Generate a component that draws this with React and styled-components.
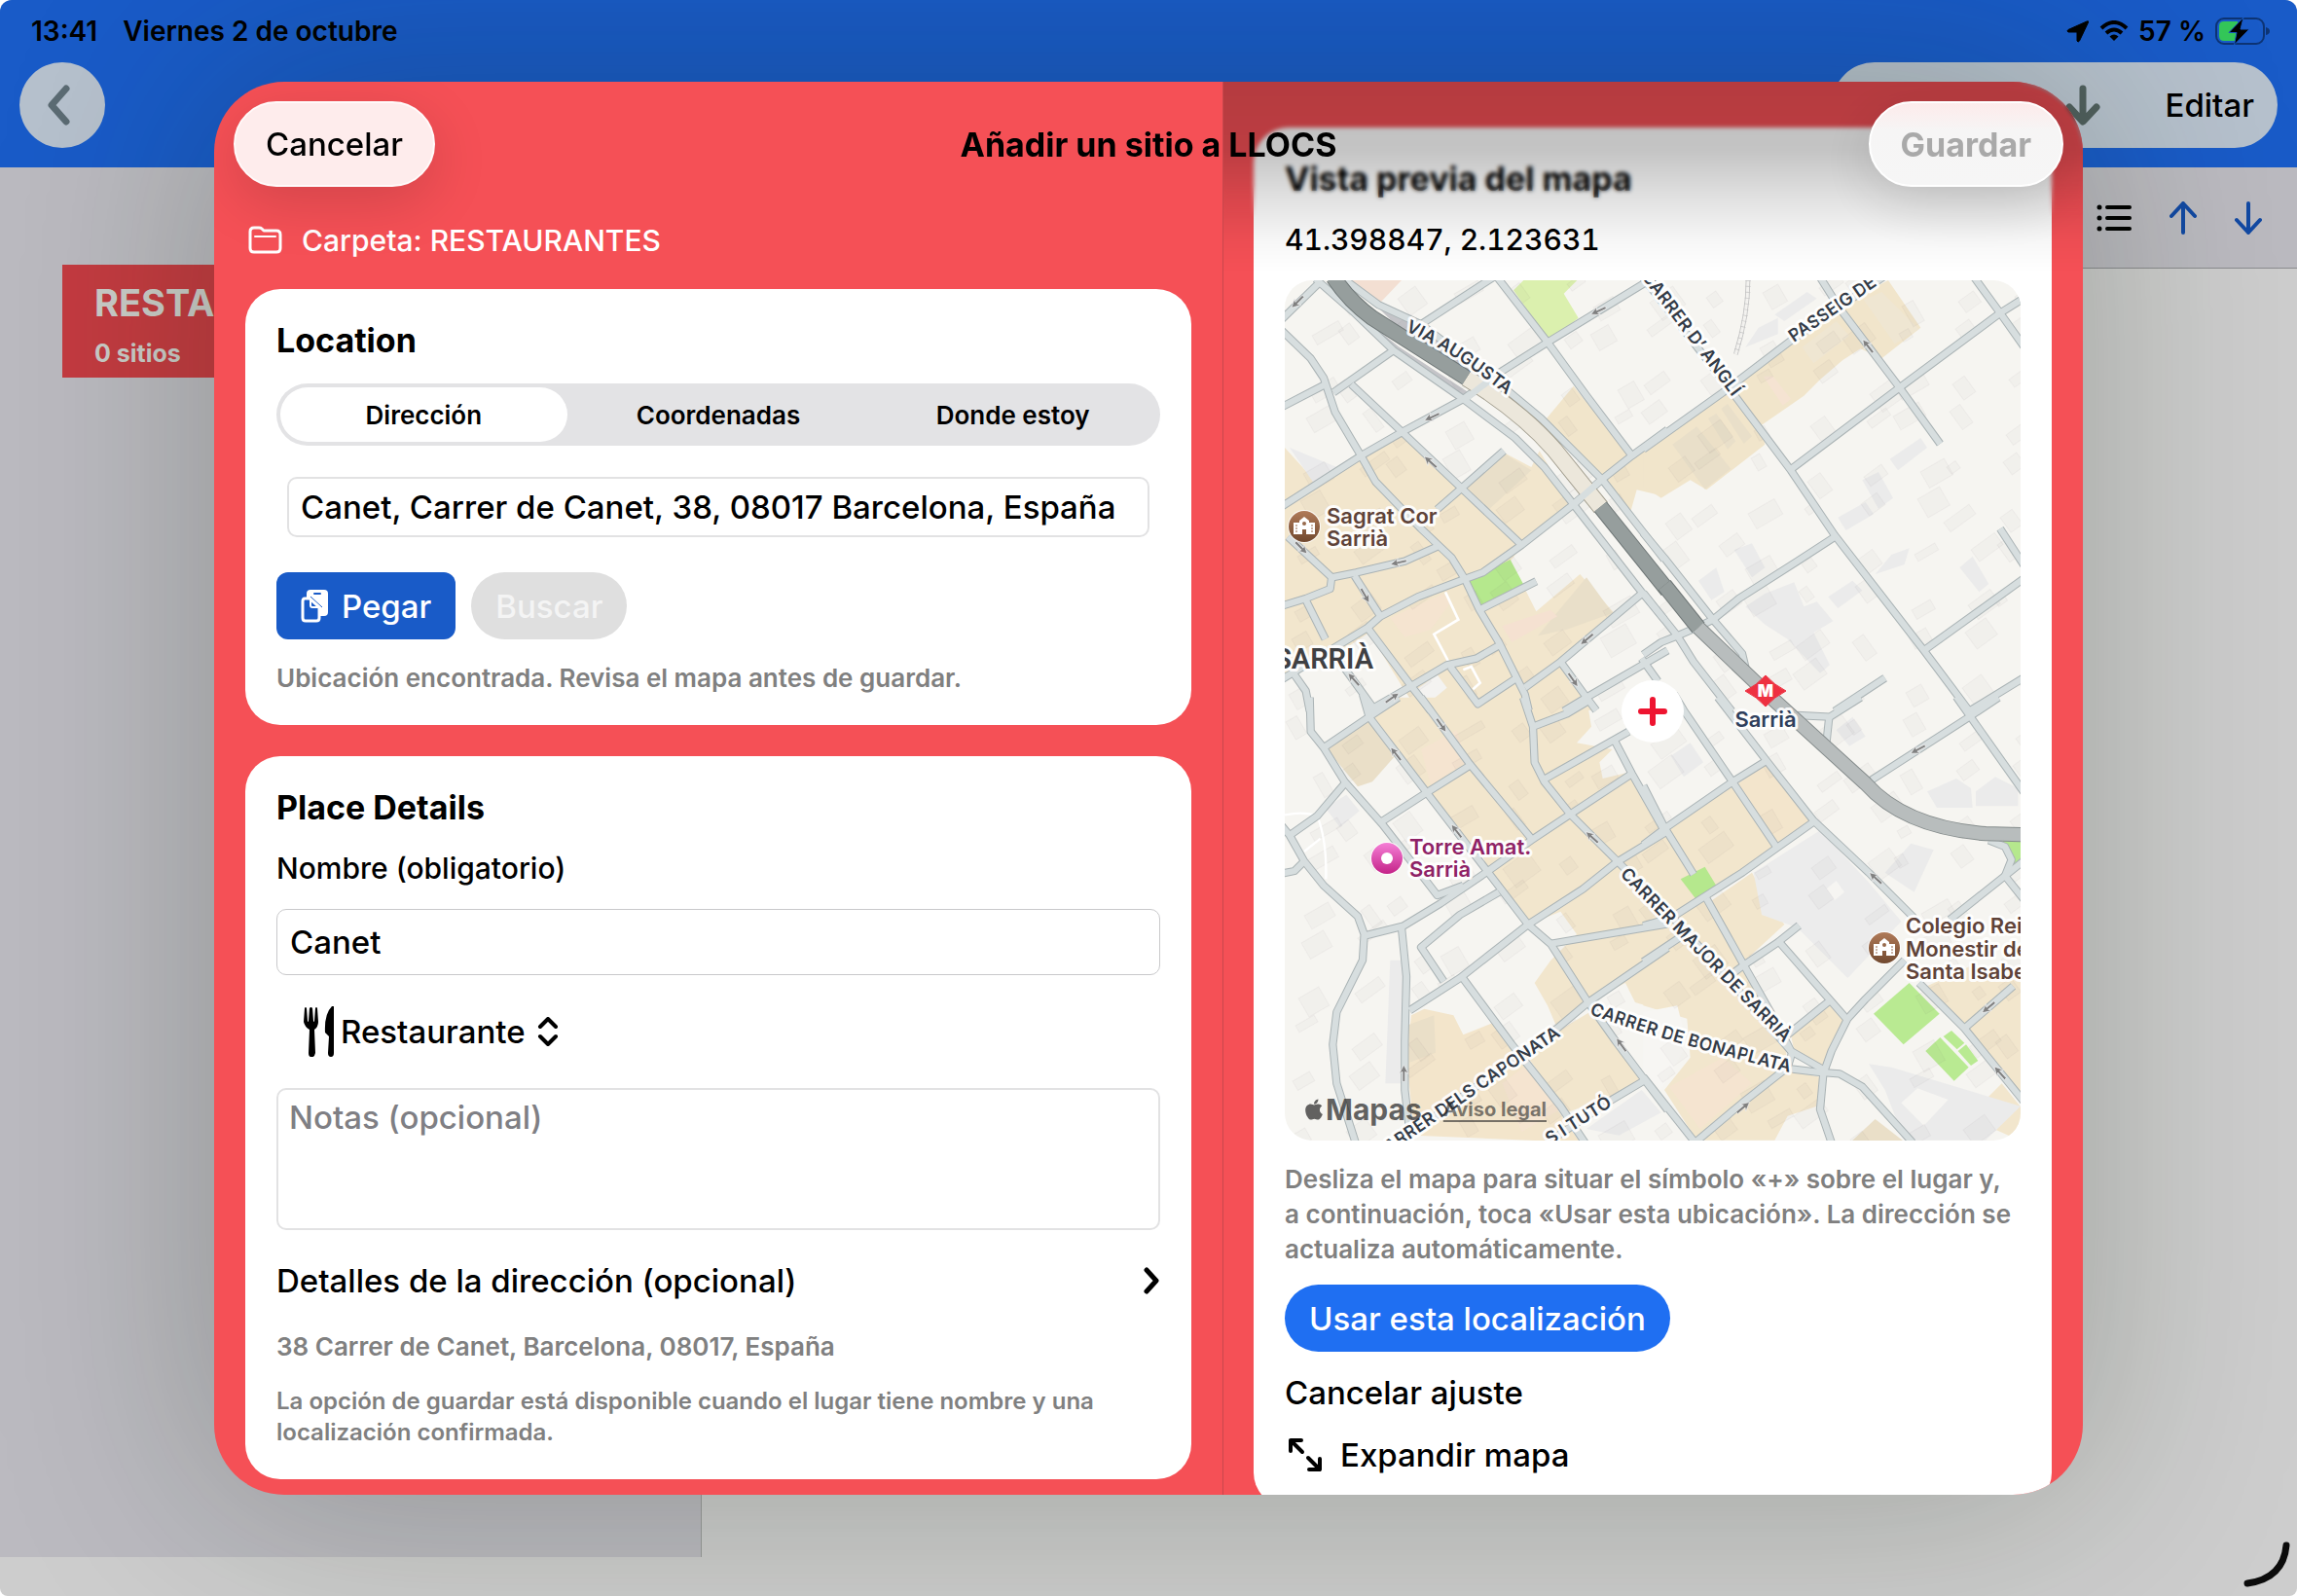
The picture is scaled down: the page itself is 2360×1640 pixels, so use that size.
import React, { useState } from "react";
import styled, { createGlobalStyle } from "styled-components";
import { FaApple } from "react-icons/fa";

const GlobalStyle = createGlobalStyle`
  * {
    box-sizing: border-box;
  }

  body {
    margin: 0;
    background: #fff;
    color: #000;
    font-family: Inter, "Liberation Sans", sans-serif;
    font-size: 33px;
    font-weight: 500;
  }

  button, input, select, textarea {
    font: inherit;
    color: inherit;
    border: 0;
    margin: 0;
    padding: 0;
    background: none;
  }

  h1, h2, p {
    margin: 0;
  }
`;

/* ---------- app behind the sheet ---------- */

const Page = styled.div`
  position: relative;
  display: grid;
  grid-template-rows: 172px 1fr 40px;
  height: 100vh;
  overflow: hidden;
  border-radius: 12px 12px 8px 8px;
  background: #cdcdcd;
`;

const TopBar = styled.header`
  display: flex;
  flex-direction: column;
  background: #195bc8;
`;

const StatusBar = styled.div`
  display: flex;
  align-items: center;
  justify-content: space-between;
  height: 64px;
  padding: 0 28px 0 32px;
  font-size: 28px;
  font-weight: 600;
`;

const StatusGroup = styled.div`
  display: flex;
  align-items: center;
  gap: ${(props) => props.$gap}px;
`;

const NavRow = styled.div`
  display: flex;
  justify-content: space-between;
  padding: 0 20px;
`;

const BackButton = styled.button`
  display: flex;
  align-items: center;
  justify-content: center;
  width: 88px;
  height: 88px;
  border-radius: 44px;
  background: #b6c1cd;
`;

const NavCapsule = styled.div`
  display: flex;
  align-items: center;
  justify-content: flex-end;
  gap: 66px;
  width: 458px;
  height: 88px;
  padding-right: 24px;
  border-radius: 44px;
  background: #b6c1cd;
`;

const Workspace = styled.div`
  display: grid;
  grid-template-columns: 721px 1fr;
`;

const Sidebar = styled.aside`
  padding: 100px 64px;
  border-right: 1px solid #9a9c9b;
  background: #bbbac0;
`;

const FolderTile = styled.div`
  display: flex;
  flex-direction: column;
  justify-content: space-between;
  height: 116px;
  padding: 16px 32px 12px 33px;
  background: #c43b41;
  color: #cbcdc9;
  font-size: 38px;
  font-weight: 700;
  line-height: 46px;
`;

const FolderCount = styled.span`
  font-size: 25px;
  font-weight: 700;
  line-height: 26px;
`;

const Toolbar = styled.div`
  display: flex;
  align-items: center;
  justify-content: flex-end;
  gap: 39px;
  height: 104px;
  padding-right: 36px;
  border-bottom: 1px solid #8b8c8f;
  background: #bbbac0;
`;

const IconButton = styled.button`
  display: flex;
  color: ${(props) => props.$color || "#000"};
`;

const CornerHandle = styled.svg`
  position: absolute;
  right: 6px;
  bottom: 6px;
`;

/* ---------- sheet ---------- */

const Overlay = styled.div`
  position: absolute;
  inset: 0;
  padding: 84px 220px 104px;
`;

const Sheet = styled.section`
  position: relative;
  display: grid;
  grid-template-columns: 1036fr 884fr;
  height: 100%;
  border-radius: 72px;
  box-shadow: 0 0 220px rgba(18, 34, 10, 0.26);
  background: #f55056;
  overflow: hidden;
`;

const SheetHeader = styled.div`
  position: absolute;
  top: 0;
  left: 0;
  right: 0;
  display: grid;
  grid-template-columns: 1fr auto 1fr;
  align-items: center;
  height: 128px;
  padding: 0 20px;
`;

const SheetTitle = styled.h1`
  font-size: 34px;
  font-weight: 700;
`;

const GlassButton = styled.button`
  height: 88px;
  padding: 0 31px;
  border: 2px solid #fffafa;
  border-radius: 44px;
  background: #feecec;
  box-shadow: 0 16px 60px rgba(0, 0, 0, 0.14);

  &:disabled {
    justify-self: end;
    border-color: #fff;
    background: linear-gradient(#fdebeb, #f6f5f5 34%, #f6f6f6);
    color: #a9a9a9;
    font-size: 34px;
    font-weight: 700;
  }
`;

const FormColumn = styled.div`
  display: flex;
  flex-direction: column;
  gap: 32px;
  padding: 144px 32px 0;
`;

const PreviewColumn = styled.div`
  position: relative;
  padding: 47px 32px 0 31px;
  border-left: 1px solid #c9474c;
`;

const ScrollEdge = styled.div`
  position: absolute;
  top: 0;
  left: 0;
  right: 0;
  height: 196px;
  background: linear-gradient(
    rgba(0, 0, 0, 0.26),
    rgba(0, 0, 0, 0.23) 36%,
    rgba(0, 0, 0, 0.12) 60%,
    rgba(0, 0, 0, 0.03) 84%,
    rgba(0, 0, 0, 0)
  );
`;

const ScrollBlur = styled.div`
  position: absolute;
  top: 0;
  left: 0;
  right: 0;
  height: 140px;
  border-top-right-radius: 72px;
  backdrop-filter: blur(2px);
  mask-image: linear-gradient(#000 75%, transparent);
`;

const FolderRow = styled.div`
  display: flex;
  align-items: center;
  gap: 20px;
  height: 37px;
  padding-left: 3px;
  color: #fff;
  font-size: 30px;
`;

const Card = styled.section`
  display: flex;
  flex-direction: column;
  gap: 24px;
  padding: 32px;
  border-radius: 36px;
  background: #fff;
`;

const CardTitle = styled.h2`
  font-size: 34px;
  font-weight: 700;
  line-height: 41px;
`;

const Segmented = styled.div`
  display: grid;
  grid-template-columns: repeat(3, 1fr);
  gap: 8px;
  height: 64px;
  padding: 4px;
  border-radius: 32px;
  background: #e3e3e5;
`;

const Segment = styled.button`
  border-radius: 28px;
  background: ${(props) => (props.$active ? "#fff" : "transparent")};
  font-size: 26px;
  font-weight: 600;
`;

const AddressWrap = styled.div`
  display: flex;
  padding: 8px 11px 12px;
`;

const AddressInput = styled.input`
  flex: 1;
  min-width: 0;
  height: 62px;
  padding: 0 12px;
  border: 2px solid #e2e2e3;
  border-radius: 10px;
`;

const ButtonRow = styled.div`
  display: flex;
  gap: 16px;
`;

const ActionButton = styled.button`
  display: flex;
  align-items: center;
  gap: 14px;
  height: 69px;
  padding: 0 25px;
  border-radius: ${(props) => (props.$square ? "12px" : "35px")};
  background: ${(props) => props.$bg};
  color: #fff;
  align-self: flex-start;

  &:disabled {
    background: #dfdfdf;
    color: #f4f4f4;
  }
`;

const Note = styled.p`
  color: #808080;
  font-size: ${(props) => (props.$small ? 24 : 26)}px;
  font-weight: 600;
  line-height: 32px;
`;

const FieldLabel = styled.label`
  font-size: 30px;
  line-height: 36px;
`;

const NameInput = styled.input`
  height: 68px;
  padding: 0 13px;
  border: 1px solid #c9c9cb;
  border-radius: 10px;
`;

const CategoryRow = styled.div`
  display: flex;
  align-items: center;
  height: 68px;
  padding-left: 28px;
`;

const CategorySelect = styled.select`
  appearance: none;
  margin: 0 12px 0 4px;
`;

const NotesInput = styled.textarea`
  height: 146px;
  padding: 8px 11px;
  border: 2px solid #e2e2e3;
  border-radius: 10px;
  line-height: 41px;
  resize: none;

  &::placeholder {
    color: #7f7f84;
  }
`;

const DisclosureButton = styled.button`
  display: flex;
  align-items: center;
  justify-content: space-between;
  height: 56px;
`;

const Coordinates = styled.p`
  font-size: 30px;
  font-variant-numeric: tabular-nums;
  line-height: 36px;
`;

const MapFrame = styled.div`
  position: relative;
  height: 884px;
  border-radius: 28px;
  overflow: hidden;
`;

const MapSvg = styled.svg`
  display: block;
  width: 100%;
  height: 100%;
`;

const Attribution = styled.div`
  position: absolute;
  left: 18px;
  bottom: 14px;
  display: flex;
  align-items: center;
  color: rgba(40, 40, 40, 0.72);
  font-size: 30px;
  font-weight: 700;
  line-height: 36px;
`;

const LegalLink = styled.a`
  margin-left: 22px;
  color: rgba(40, 40, 40, 0.62);
  font-size: 20px;
  font-weight: 700;
  text-underline-offset: 4px;
`;

const MapHelp = styled.p`
  margin: -2px 0 -6px;
  color: #808080;
  font-size: 26px;
  font-weight: 600;
  line-height: 36px;
`;

const MapActions = styled.div`
  display: flex;
  flex-direction: column;
  gap: 20px;
`;

const PlainButton = styled.button`
  display: flex;
  align-items: center;
  gap: 18px;
  height: 44px;
  padding-left: ${(props) => (props.$icon ? 3 : 0)}px;
  align-self: flex-start;
`;

/* ---------- map drawing ---------- */

// The city is drawn in four tiles, each three units to a pixel.
const TILES = {
  nw: "translate(-10 -8) scale(0.333333)",
  ne: "translate(370 -8) scale(0.333333)",
  sw: "translate(-10 432) scale(0.333333)",
  se: "translate(370 432) scale(0.333333)",
};

const ROADS = {
  nw: [
    "20,145 140,28",
    "125,20 240,120 365,240 580,390 740,510 830,600 920,715 1130,985 1200,1070",
    "20,178 110,265 150,325 185,430 265,565 310,645 450,790 545,880 585,945 630,1040 690,1140 740,1240 770,1300 782,1350",
    "20,415 155,345",
    "180,370 365,240",
    "450,160 680,10",
    "20,722 265,565 395,490 580,390 690,310 840,215 1160,20",
    "685,15 840,215 960,380 1100,565",
    "235,345 395,495 575,665 760,840",
    "205,15 320,100 450,160 700,350 820,450 1010,640 1130,795 1200,885",
    "705,550 575,665 500,730",
    "1210,485 1100,565 1005,640 920,715 760,840 640,925 585,945 440,1000 325,1060 285,1095 20,1255",
    "40,815 175,940 250,925 400,890 500,845",
    "175,935 170,975 95,1005 20,1028",
    "95,1010 155,1130",
    "245,935 325,1060",
    "285,1095 420,1275 480,1352",
    "770,1280 880,1200 1130,990",
    "880,1200 960,1310 990,1350",
    "630,1040 805,952",
    "290,1350 420,1275 530,1210 620,1190 690,1150",
    "540,1215 625,1330 745,1250",
    "200,1200 305,1345",
    "60,1240 95,1290 107,1352",
    "890,1352 960,1310 1210,1165",
    "1130,1190 1180,1260",
  ],
  ne: [
    "-5,545 240,370 450,210 740,10",
    "-10,10 270,370 450,610 585,810 860,1165 1000,1352",
    "540,15 600,110 785,355 910,528",
    "450,607 785,355 1095,125 1170,78",
    "1015,15 1095,125 1168,228",
    "1170,942 860,1165",
    "1095,790 1170,905",
    "590,812 470,890 290,1005 210,1070 165,1092 100,1120 50,1140 -5,1178",
    "-5,803 60,880 210,1070 300,1175 318,1250",
    "-5,988 100,1120 150,1200 268,1352",
    "740,1250 585,1352",
    "1170,1248 1000,1352",
  ],
  sw: [
    "150,145 290,50 380,-10",
    "107,-10 110,95 150,145 215,250 330,380 400,470 500,600 580,570",
    "270,-20 290,50 465,280 650,520 780,690 850,750 965,930 1050,1050 1140,1170 1210,1262",
    "450,-10 600,195 790,425",
    "330,372 465,285 600,200",
    "215,255 130,355 45,415",
    "20,385 45,415 90,495 150,570 255,665 275,720 270,800 190,960 178,1060 190,1180 248,1362",
    "90,495 60,525 20,533",
    "275,725 395,695 510,625 650,530 790,430 910,350 1100,225",
    "765,-10 795,80 800,190 830,250 910,350 1050,490 1210,650",
    "795,80 900,40 975,-5",
    "825,245 1090,95",
    "1045,120 1100,225 1205,410",
    "415,955 570,855 780,690 950,580 1050,500 1210,402",
    "690,590 570,660 450,760 520,865",
    "575,850 730,1060 880,1250 955,1362",
    "390,700 405,850 400,1050 400,1200 415,1330",
    "845,750 1210,688",
    "1210,762 965,930 870,1010 380,1362",
    "1140,1170 1030,1235 840,1362",
  ],
  se: [
    "-5,1160 155,1362",
    "90,-20 120,30 270,250 405,450",
    "225,-10 375,185 520,370 690,530 830,670",
    "845,870 985,1010 1170,1238",
    "800,800 680,920 625,980 575,1080 550,1150 540,1260 575,1362",
    "-5,444 60,395 270,250 375,185",
    "-5,262 60,390 150,535",
    "-5,805 130,715",
    "-5,694 80,670 190,600 300,530 405,455 525,370",
    "60,640 260,860 450,1080 555,1140",
    "190,610 305,815 410,1000 450,1080",
    "265,845 305,815 410,745 475,693",
    "415,745 625,985",
    "440,1030 570,925",
    "155,1362 300,1240 440,1130 455,1080",
    "450,1135 530,1145 600,1150 670,1190 825,1362",
    "470,45 570,50 665,-10",
    "568,50 560,125",
    "690,250 1000,50 1090,-10",
    "960,-12 1168,282",
    "940,675 1110,540 1170,492",
    "1060,430 1110,450 1130,490 1110,540 1170,615",
    "985,1010 1135,880",
  ],
};

const BLOCKS = {
  nw: [
    ["#f1e5cb", "920,350 1090,560 1005,635 820,470"],
    ["#f1e5cb", "1020,640 1200,500 1200,690 1115,670 1095,740"],
    ["#f2e6cd", "30,540 130,650 265,575 395,500 575,665 705,555 790,600 815,550 915,715 760,845 725,890 765,965 805,1045 940,930 1045,1050 880,1200 960,1310 980,1350 440,1350 400,1290 290,1110 200,1170 30,1240"],
    ["#ebebec", "45,540 190,600 120,650"],
    ["#f5e4d0", "355,1065 520,990 540,1020 480,1100 400,1125"],
    ["#e9dfc9", "590,660 710,560 790,610 660,730"],
    ["#e9dfc9", "810,1120 960,940 1040,1050 900,1100"],
    ["#f5e1d1", "700,1090 850,1040 870,1060 730,1140"],
    ["#f4f3f1", "430,1290 500,1240 530,1280 470,1330"],
    ["#f3dfd2", "215,24 390,24 325,92"],
    ["#dbf0ae", "735,55 770,20 935,20 890,65 935,140 845,212"],
    ["#b5e88d", "595,950 725,885 765,960 625,1030"],
    ["#c4c4c8", "235,110 365,225 580,385 600,372 380,228"],
    ["#c4c4c8", "300,90 450,160 600,300 580,320 400,190"],
  ],
  ne: [
    ["#f1e5cb", "-5,550 240,370 700,50 750,24 850,170 730,265 665,235 610,270 540,330 490,380 360,470 370,530 190,670 140,640 50,695 -5,660"],
    ["#e9dfc9", "85,530 160,475 265,605 185,668"],
    ["#e9dfc9", "195,450 220,435 280,520 255,545"],
    ["#e9dfc9", "235,420 255,405 330,505 305,528"],
    ["#efe6d2", "675,85 730,60 845,175 770,220"],
    ["#efe6d2", "485,230 590,150 630,195 520,280"],
    ["#f5e3d2", "365,320 395,320 450,390 425,410"],
    ["#ebebeb", "310,1030 370,990 460,955 490,1030 530,1015 580,1075 520,1110 570,1210 540,1235 440,1130 370,1085"],
    ["#ebebeb", "670,640 720,615 765,695 720,728"],
    ["#ebebeb", "595,755 680,708 705,745 620,795"],
    ["#ebebeb", "565,1000 640,950 670,980 595,1035"],
    ["#ebebeb", "275,855 330,835 370,910 330,940"],
    ["#ebebeb", "165,950 220,910 245,985 205,1010"],
    ["#ebebeb", "710,930 760,870 815,850 800,900"],
    ["#ebebeb", "755,575 850,510 870,540 780,610"],
    ["#ebebeb", "400,130 500,60 530,80 430,150"],
    ["#ebebeb", "310,230 350,170 410,140 410,190"],
    ["#ebebeb", "970,910 1010,875 1060,960 1030,985"],
  ],
  sw: [
    ["#f2e6cd", "300,40 370,-10 960,-10 975,80 930,130 1040,150 1000,190 1010,240 1095,220 1210,420 1210,960 1110,930 1080,870 960,930 870,1010 840,940 800,870 850,800 930,720 880,650 780,690 680,570 640,480 465,280 380,180"],
    ["#eadfc8", "160,150 290,60 370,170 300,250 255,265"],
    ["#f3e5cb", "420,970 460,950 550,970 580,1030 680,990 740,1070 940,1362 430,1340 405,1100"],
    ["#eadfc8", "410,1000 490,970 495,1085 415,1115"],
    ["#f2e6cd", "870,1020 970,960 1140,1180 900,1270 780,1100"],
    ["#f5e4d0", "450,150 560,90 590,190 480,260"],
    ["#f5e4d0", "700,1180 780,1120 880,1260 760,1330"],
    ["#ebebeb", "355,800 400,800 400,1180 340,1180"],
    ["#ebebeb", "155,330 220,290 260,340 200,390"],
    ["#ececec", "960,1320 1130,1200 1190,1270 1060,1340"],
  ],
  se: [
    ["#f2e6cd", "-5,270 60,390 270,260 405,450 190,600 305,815 325,870 430,1030 440,1130 160,1355 60,1200 140,1100 130,980 -5,940"],
    ["#f3e5cc", "280,260 375,195 515,370 410,445"],
    ["#f2e6cd", "200,620 330,530 380,620 430,690 310,800"],
    ["#f2e6cd", "450,1030 570,940 620,990 555,1130 460,1080"],
    ["#f2e6cd", "180,1355 440,1140 540,1160 530,1250 440,1280 400,1355"],
    ["#f2e6cd", "870,880 1000,820 1165,830 1165,1230 985,1010"],
    ["#eadfc8", "635,1360 710,1290 800,1360"],
    ["#f2e6cd", "1050,1230 1100,1180 1165,1260 1165,1360 1030,1300"],
    ["#f5e4d0", "75,1190 240,1100 330,1180 170,1320"],
    ["#f7f6f3", "-5,960 100,940 130,1060 50,1200 -5,1150"],
    ["#ececec", "335,530 540,400 690,560 790,680 625,855 470,700 360,660"],
    ["#f6f5f2", "560,580 590,555 615,590 585,615"],
    ["#ebebeb", "740,530 820,440 890,460 830,590"],
    ["#ebebeb", "690,1120 760,1130 1158,1250 1050,1355 800,1355 740,1200"],
    ["#f6f5f2", "790,1240 840,1195 935,1230 860,1310"],
    ["#ebebeb", "870,280 960,240 1005,270 1010,330 900,330"],
    ["#ebebeb", "1020,280 1080,235 1150,270 1150,325 1020,325"],
    ["#ebebeb", "590,90 640,50 680,110 630,140"],
    ["#ebebeb", "80,170 140,130 180,190 120,235"],
    ["#b5e88d", "110,550 185,512 220,570 160,615"],
    ["#b9ea92", "705,965 815,870 908,965 797,1060"],
    ["#b9ea92", "865,1080 910,1038 998,1130 953,1172"],
    ["#b9ea92", "920,1035 945,1017 985,1055 962,1075"],
    ["#b9ea92", "965,1080 990,1060 1027,1110 1005,1125"],
    ["#b5e88d", "1100,430 1165,430 1165,485 1135,505 1125,460"],
  ],
};

const ARROWS = {
  nw: [[70, 90, 135], [485, 445, 155], [480, 585, 222], [998, 118, 155], [80, 848, 45], [382, 894, 167], [277, 995, 60], [243, 1255, 228], [360, 1312, -35], [962, 1130, 140], [918, 1255, 55]],
  ne: [[688, 228, 232]],
  sw: [[512, 75, 55], [373, 165, 232], [560, 403, 232], [978, 422, 222], [397, 1150, 270], [1068, 1062, 234]],
  se: [[843, 150, 152], [712, 548, 222], [1060, 945, 140], [1095, 1148, 228], [302, 1255, -40]],
};

// small repeatable scatter of houses between the streets
const HOUSES = Array.from({ length: 300 }, (_, i) => {
  const col = i % 15;
  const row = Math.floor(i / 15);
  return {
    x: col * 52 + ((i * 37) % 31),
    y: row * 45 + ((i * 53) % 29),
    w: 10 + ((i * 29) % 23),
    h: 8 + ((i * 41) % 17),
    angle: i % 3 ? -36 : -30,
  };
});

const LABELS = [
  { id: "augusta", d: "M124 52Q178 76 240 128", text: "VIA AUGUSTA" },
  { id: "angli", d: "M334 -46L460 120", text: "CARRER D’ ANGLÍ", end: true },
  { id: "passeig", d: "M523 64L680 -44", text: "PASSEIG DE" },
  { id: "major", d: "M344 611L540 812", text: "CARRER MAJOR DE SARRIÀ" },
  { id: "bonaplata", d: "M313 754Q400 786 560 824", text: "CARRER DE BONAPLATA" },
  { id: "caponata", d: "M64 927L284 776", text: "CARRER DELS CAPONATA", end: true },
  { id: "tuto", d: "M236 912L337 848", text: "S I TUTÓ", end: true },
];

const MapText = styled.text`
  fill: ${(props) => props.$color || "#333b47"};
  stroke: rgba(255, 255, 255, 0.92);
  stroke-width: 6px;
  stroke-linejoin: round;
  paint-order: stroke;
  font-size: ${(props) => props.$size || 18}px;
  font-weight: ${(props) => props.$weight || 600};
  font-family: ${(props) => props.$family || "inherit"};
`;

const SchoolPin = ({ x, y }) => (
  <g transform={`translate(${x} ${y})`}>
    <circle r="17" fill="#fff" opacity="0.8" />
    <circle r="16" fill="url(#schoolFill)" />
    <path d="M-11 -4H-5V-6L0 -10L5 -6V-4H11V8H2V3H-2V8H-11z" fill="#fff" />
    <circle cy="-3" r="2" fill="#96694c" />
    <path d="M-9 -1h2M-9 2h2M-9 5h2M7 -1h2M7 2h2M7 5h2" stroke="#96694c" />
  </g>
);

const CityMap = () => (
  <MapSvg viewBox="0 0 756 884" preserveAspectRatio="xMidYMid slice" aria-label="Mapa">
    <defs>
      <linearGradient id="schoolFill" x1="0" y1="0" x2="0" y2="1">
        <stop offset="0" stopColor="#b07a58" />
        <stop offset="1" stopColor="#71492f" />
      </linearGradient>
      <linearGradient id="towerFill" x1="0" y1="0" x2="0" y2="1">
        <stop offset="0" stopColor="#f57fd6" />
        <stop offset="1" stopColor="#c42388" />
      </linearGradient>
    </defs>
    <rect width="756" height="884" fill="#f6f5f1" />
    {Object.keys(BLOCKS).map((tile) => (
      <g key={tile} transform={TILES[tile]}>
        {BLOCKS[tile].map(([fill, points]) => (
          <polygon key={points} points={points} fill={fill} />
        ))}
      </g>
    ))}
    <g fill="#6e6a6e" fillOpacity="0.03" stroke="#6e6a6e" strokeOpacity="0.05">
      {HOUSES.map(({ x, y, w, h, angle }, i) => (
        <rect key={i} x={x} y={y} width={w} height={h} transform={`rotate(${angle} ${x} ${y})`} />
      ))}
    </g>
    <g transform={TILES.nw} fill="none" stroke="#fff" strokeWidth="8">
      <path d="M525 985L565 1070L490 1115L535 1200M580 1225L605 1215L632 1265L610 1285" />
    </g>
    <g transform={TILES.sw} fill="none" stroke="#fff" strokeWidth="7">
      <path d="M30 352Q90 340 130 355Q160 430 157 550M90 465L140 425" />
    </g>
    <g transform={TILES.ne} fill="none">
      <path d="M318 24Q318 130 280 252" stroke="#c3c3c3" strokeWidth="14" />
      <path d="M318 24Q318 130 280 252" stroke="#f3f2ef" strokeWidth="9" />
      <path d="M318 24Q318 130 280 252" stroke="#c3c3c3" strokeWidth="16" strokeDasharray="2 16" />
    </g>
    {[["#aab3b5", 25], ["#d7dedf", 19]].map(([stroke, width]) => (
      <g key={stroke} fill="none" stroke={stroke} strokeWidth={width} strokeLinejoin="round">
        {Object.keys(ROADS).map((tile) => (
          <g key={tile} transform={TILES[tile]}>
            {ROADS[tile].map((points) => (
              <polyline key={points} points={points} />
            ))}
          </g>
        ))}
      </g>
    ))}
    {/* railway */}
    <g transform={TILES.nw} fill="none">
      <path d="M590 325Q760 430 860 545L1005 725" stroke="#a39f90" strokeWidth="54" />
      <path d="M590 325Q760 430 860 545L1005 725" stroke="#ece7db" strokeWidth="48" />
      <path d="M180 15Q230 90 300 140L590 325M1003 722L1210 980" stroke="#6f7777" strokeWidth="50" />
      <path d="M180 15Q230 90 300 140L590 325M1003 722L1210 980" stroke="#969e9d" strokeWidth="44" />
      <path d="M580 395L690 310M920 715L1005 640" stroke="#d7dedf" strokeWidth="20" />
    </g>
    <g transform={TILES.ne} fill="none">
      <path d="M60 964L165 1095" stroke="#6f7777" strokeWidth="50" />
      <path d="M60 964L165 1095" stroke="#969e9d" strokeWidth="44" />
    </g>
    <g transform={TILES.se} fill="none">
      <path d="M165 -225L400 0L680 255Q800 390 1050 410L1170 413" stroke="#858c8c" strokeWidth="46" />
      <path d="M165 -225L400 0L680 255Q800 390 1050 410L1170 413" stroke="#b8bdbd" strokeWidth="40" />
    </g>
    {Object.keys(ARROWS).map((tile) => (
      <g key={tile} transform={TILES[tile]}>
        {ARROWS[tile].map(([x, y, angle]) => (
          <path
            key={`${x}-${y}`}
            transform={`translate(${x} ${y}) rotate(${angle})`}
            d="M-24 -4H6L0 -14L27 0L0 14L6 4H-24z"
            fill="#808080"
            stroke="#f3f3f3"
            strokeWidth="2"
          />
        ))}
      </g>
    ))}
    {LABELS.map(({ id, d, text, end }) => (
      <React.Fragment key={id}>
        <path id={id} d={d} fill="none" />
        <MapText textAnchor={end ? "end" : "start"}>
          <textPath href={`#${id}`} startOffset={end ? "100%" : "0"}>
            {text}
          </textPath>
        </MapText>
      </React.Fragment>
    ))}
    <MapText x="91" y="399" textAnchor="end" $size={29} $family="Roboto" $color="#3f4043">
      SARRIÀ
    </MapText>

    <SchoolPin x={20} y={253} />
    <MapText $size={22} $color="#5f4339">
      <tspan x="43" y="250">Sagrat Cor</tspan>
      <tspan x="43" y="273">Sarrià</tspan>
    </MapText>
    <SchoolPin x={616} y={686} />
    <MapText $size={22} $color="#5f4339">
      <tspan x="638" y="671">Colegio Reial</tspan>
      <tspan x="638" y="695">Monestir de</tspan>
      <tspan x="638" y="718">Santa Isabel</tspan>
    </MapText>
    <circle cx="105" cy="594" r="17" fill="#fff" opacity="0.8" />
    <circle cx="105" cy="594" r="16" fill="url(#towerFill)" />
    <circle cx="105" cy="594" r="6" fill="#fff" />
    <MapText $size={22} $color="#8f2266">
      <tspan x="128" y="590">Torre Amat.</tspan>
      <tspan x="128" y="613">Sarrià</tspan>
    </MapText>
    <path d="M494 406Q503 416 515 422Q503 428 494 438Q485 428 473 422Q485 416 494 406z" fill="#ee3141" stroke="#ee3141" />
    <text x="494" y="428" textAnchor="middle" fill="#fff" fontSize="17" fontWeight="900">M</text>
    <MapText x="494" y="459" textAnchor="middle" $size={22} $color="#2f3f5c">
      Sarrià
    </MapText>

    <circle cx="378" cy="443" r="32" fill="#fff" />
    <path d="M366 443h24M378 431v24" stroke="#ee1430" strokeWidth="6" strokeLinecap="round" />
  </MapSvg>
);

/* ---------- icons ---------- */

const Stroke = ({ width, height, d, weight, color = "currentColor" }) => (
  <svg width={width} height={height} viewBox={`0 0 ${width} ${height}`} fill="none" aria-hidden="true">
    <path d={d} stroke={color} strokeWidth={weight} strokeLinecap="round" strokeLinejoin="round" />
  </svg>
);

const LocationIcon = () => (
  <svg width="24" height="24" viewBox="0 0 24 24" aria-hidden="true">
    <path d="M21 2L2 10.500Q0 12 2 13H11V22Q12 24 13.500 22L22.500 3Q23 1 21 2z" stroke="#000" strokeLinejoin="round" />
  </svg>
);

const WifiIcon = () => (
  <svg width="30" height="22" viewBox="0 0 30 22" fill="none" stroke="#000" strokeWidth="4" aria-hidden="true">
    <path d="M2 8Q15 -4 28 8M7 13Q15 6 23 13" />
    <path d="M15 21L10.500 16.500Q15 12.500 19.500 16.500z" fill="#000" stroke="none" />
  </svg>
);

const BatteryIcon = () => (
  <svg width="56" height="28" viewBox="0 0 56 28" aria-hidden="true">
    <rect x="1" y="1" width="49" height="26" rx="8" fill="none" stroke="#0d3474" strokeWidth="2" />
    <path d="M52 10q4 1 4 4t-4 4z" fill="#0d3474" />
    <path d="M9 4H23V24H9Q4 24 4 19V9Q4 4 9 4z" fill="#34c759" />
    <path d="M29 0L14 15.500H22L19.500 28L35 12H26z" fill="#000" stroke="#1757bf" strokeWidth="1" />
  </svg>
);

const ListIcon = () => (
  <svg width="36" height="28" viewBox="0 0 36 28" stroke="#000" strokeLinecap="round" aria-hidden="true">
    <path d="M11 3H34M11 14H34M11 25H34" strokeWidth="4" />
    <path d="M3 3h0M3 14h0M3 25h0" strokeWidth="5" />
  </svg>
);

const FolderIcon = () => (
  <svg width="35" height="30" viewBox="0 0 35 30" fill="none" stroke="#fff" strokeWidth="3" strokeLinejoin="round" strokeLinecap="round" aria-hidden="true">
    <path d="M2 6Q2 2 6 2H11Q13 2 14 3L16 5H29Q33 5 33 9V23Q33 27 29 27H6Q2 27 2 23z" />
    <path d="M7 11H28" strokeWidth="2" />
  </svg>
);

const PasteIcon = () => (
  <svg width="28" height="34" viewBox="0 0 28 34" fill="none" aria-hidden="true">
    <rect x="6" y="0" width="22" height="27" rx="4" fill="#fff" />
    <path d="M14 4h6" stroke="#195bc8" strokeWidth="2" strokeLinecap="round" />
    <path d="M10 7L22 18" stroke="#195bc8" />
    <path d="M4 9H9L19 18V29Q19 32 16 32H5Q2 32 2 29V12Q2 9 4 9z" fill="#195bc8" stroke="#fff" strokeWidth="3" strokeLinejoin="round" />
    <path d="M10 10V16Q10 18 12 18H18" stroke="#fff" strokeWidth="2" />
  </svg>
);

const ForkKnifeIcon = () => (
  <svg width="34" height="52" viewBox="0 0 34 52" aria-hidden="true">
    <path d="M1 2Q2 0 3 2L4 15Q4 17 5 15L6 2Q7.500 0 9 2L10 15Q10.500 17 11 15L12 2Q13 0 14 2L15 16Q15 21 11 24L12 48Q11 53 7.500 52Q5 52 5 48L6 24Q1 21 0 16z" />
    <path d="M31 1V48Q31 52 28 52Q25 52 25 48L26 31L22 27Q21 8 29 0Q31 -1 31 1z" />
  </svg>
);

const ExpandIcon = () => (
  <svg width="36" height="36" viewBox="0 0 36 36" fill="none" stroke="#000" strokeWidth="4" strokeLinecap="round" strokeLinejoin="round" aria-hidden="true">
    <path d="M3 14V3H14M3 3L15 15M33 22V33H22M33 33L21 21" />
  </svg>
);

/* ---------- screen ---------- */

const TABS = ["Dirección", "Coordenadas", "Donde estoy"];

const App = () => {
  const [tab, setTab] = useState(TABS[0]);
  const [address, setAddress] = useState("Canet, Carrer de Canet, 38, 08017 Barcelona, España");
  const [name, setName] = useState("Canet");

  return (
    <>
      <GlobalStyle />
      <Page>
        <TopBar>
          <StatusBar>
            <StatusGroup $gap={26}>
              <span>13:41</span>
              <span>Viernes 2 de octubre</span>
            </StatusGroup>
            <StatusGroup $gap={10}>
              <LocationIcon />
              <WifiIcon />
              <span>57 %</span>
              <BatteryIcon />
            </StatusGroup>
          </StatusBar>
          <NavRow>
            <BackButton aria-label="Atrás">
              <Stroke width={32} height={42} weight={7} color="#5b6b73" d="M20 4L5 21L20 38" />
            </BackButton>
            <NavCapsule>
              <IconButton aria-label="Descargar" $color="#51605f">
                <Stroke width={36} height={42} weight={7} d="M18 4V37M4 23L18 38L32 23" />
              </IconButton>
              <IconButton>Editar</IconButton>
            </NavCapsule>
          </NavRow>
        </TopBar>
        <Workspace>
          <Sidebar>
            <FolderTile>
              RESTAURANTES
              <FolderCount>0 sitios</FolderCount>
            </FolderTile>
          </Sidebar>
          <main>
            <Toolbar>
              <IconButton aria-label="Lista">
                <ListIcon />
              </IconButton>
              <IconButton aria-label="Subir" $color="#1249a3">
                <Stroke width={28} height={34} weight={4} d="M14 32V2M2 15L14 2L26 15" />
              </IconButton>
              <IconButton aria-label="Bajar" $color="#1249a3">
                <Stroke width={28} height={34} weight={4} d="M14 2V32M2 19L14 32L26 19" />
              </IconButton>
            </Toolbar>
          </main>
        </Workspace>

        <Overlay>
          <Sheet>
            <FormColumn>
              <FolderRow>
                <FolderIcon />
                Carpeta: RESTAURANTES
              </FolderRow>
              <Card>
                <CardTitle>Location</CardTitle>
                <Segmented>
                  {TABS.map((item) => (
                    <Segment key={item} $active={item === tab} onClick={() => setTab(item)}>
                      {item}
                    </Segment>
                  ))}
                </Segmented>
                <AddressWrap>
                  <AddressInput
                    aria-label="Dirección"
                    value={address}
                    onChange={(e) => setAddress(e.target.value)}
                  />
                </AddressWrap>
                <ButtonRow>
                  <ActionButton $square $bg="#195bc8">
                    <PasteIcon />
                    Pegar
                  </ActionButton>
                  <ActionButton disabled>Buscar</ActionButton>
                </ButtonRow>
                <Note>Ubicación encontrada. Revisa el mapa antes de guardar.</Note>
              </Card>
              <Card>
                <CardTitle>Place Details</CardTitle>
                <FieldLabel htmlFor="name">Nombre (obligatorio)</FieldLabel>
                <NameInput id="name" value={name} onChange={(e) => setName(e.target.value)} />
                <CategoryRow>
                  <ForkKnifeIcon />
                  <CategorySelect aria-label="Categoría">
                    <option>Restaurante</option>
                  </CategorySelect>
                  <Stroke width={22} height={30} weight={4} d="M3 10L11 2L19 10M3 20L11 28L19 20" />
                </CategoryRow>
                <NotesInput aria-label="Notas" placeholder="Notas (opcional)" />
                <DisclosureButton>
                  Detalles de la dirección (opcional)
                  <Stroke width={18} height={28} weight={5} d="M4 3L14 14L4 25" />
                </DisclosureButton>
                <Note>38 Carrer de Canet, Barcelona, 08017, España</Note>
                <Note $small>
                  La opción de guardar está disponible cuando el lugar tiene nombre y una localización confirmada.
                </Note>
              </Card>
            </FormColumn>

            <PreviewColumn>
              <Card>
                <CardTitle>Vista previa del mapa</CardTitle>
                <Coordinates>41.398847, 2.123631</Coordinates>
                <MapFrame>
                  <CityMap />
                  <Attribution>
                    <FaApple size={24} />
                    Mapas
                    <LegalLink href="#legal">Aviso legal</LegalLink>
                  </Attribution>
                </MapFrame>
                <MapHelp>
                  Desliza el mapa para situar el símbolo «+» sobre el lugar y, a continuación, toca «Usar esta
                  ubicación». La dirección se actualiza automáticamente.
                </MapHelp>
                <MapActions>
                  <ActionButton $bg="#1f6ff2">Usar esta localización</ActionButton>
                  <PlainButton>Cancelar ajuste</PlainButton>
                  <PlainButton $icon>
                    <ExpandIcon />
                    Expandir mapa
                  </PlainButton>
                </MapActions>
              </Card>
              <ScrollBlur />
              <ScrollEdge />
            </PreviewColumn>

            <SheetHeader>
              <div>
                <GlassButton>Cancelar</GlassButton>
              </div>
              <SheetTitle>Añadir un sitio a LLOCS</SheetTitle>
              <GlassButton disabled>Guardar</GlassButton>
            </SheetHeader>
          </Sheet>
        </Overlay>

        <CornerHandle width="50" height="50" viewBox="0 0 50 50" fill="none" aria-hidden="true">
          <path d="M45 4Q42 38 5 43" stroke="#0b0b0b" strokeWidth="7" strokeLinecap="round" />
        </CornerHandle>
      </Page>
    </>
  );
};

export default App;
